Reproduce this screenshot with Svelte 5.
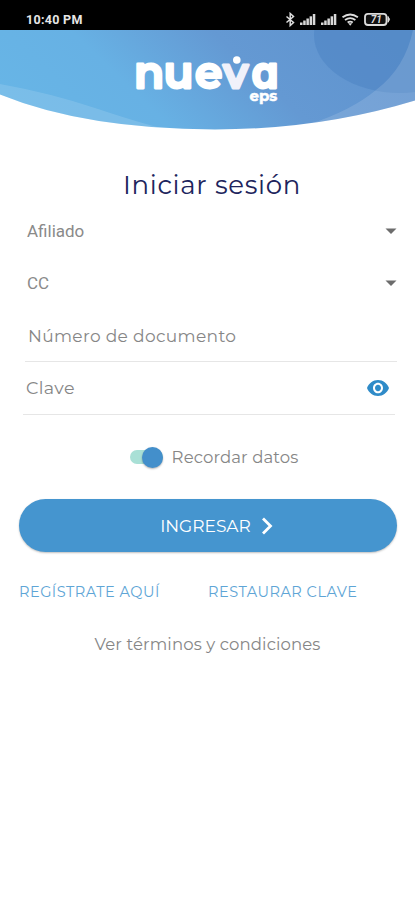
<script>
  let remember = $state(true);
  let showPassword = $state(false);
  let documento = $state("");
  let clave = $state("");

  const selects = [
    { id: "tipo", value: "Afiliado" },
    { id: "documento", value: "CC" },
  ];
</script>

<main>
  <div class="status">
    <span class="time">10:40 PM</span>
    <svg class="status-icons" width="108" height="16" viewBox="284 12 108 16">
      <path d="M286.5 16.5l7 6-3.3 3v-12l3.3 3-7 6" fill="none" stroke="#ddd" stroke-width="1.5" />
      {#each [300, 321] as x}
        <g fill="#d8d8d8">
          <rect {x} y="22.5" width="2.5" height="2.5" />
          <rect x={x + 3.2} y="20.5" width="2.5" height="4.5" />
          <rect x={x + 6.4} y="18.5" width="2.5" height="6.5" />
          <rect x={x + 9.6} y="16.3" width="2.5" height="8.7" />
          <rect x={x + 12.8} y="14" width="2.5" height="11" />
        </g>
      {/each}
      <g fill="none" stroke="#ddd" stroke-width="1.8">
        <path d="M342.5 17.3q7.7-5.6 15.4 0" />
        <path d="M345 20q5.2-3.8 10.4 0" />
        <path d="M347.6 22.5q2.6-1.8 5.2 0" />
      </g>
      <path d="M348.2 23.3h4l-2 2.5z" fill="#ddd" />
      <rect x="365" y="13.8" width="21.5" height="11.2" rx="3" fill="#111" stroke="#ddd" stroke-width="1.8" />
      <path d="M388 16.5q3 2.8 0 5.8z" fill="#ddd" stroke="#ddd" />
      <text x="376.3" y="22.9" text-anchor="middle" class="battery">71</text>
    </svg>
  </div>

  <header>
    <svg width="415" height="100" viewBox="0 30 415 100">
      <defs>
        <linearGradient id="sky" x1="0" y1="0.6" x2="1" y2="0.35">
          <stop offset="0" stop-color="#67b5e6" />
          <stop offset="0.3" stop-color="#67b1e4" />
          <stop offset="0.62" stop-color="#6499d3" />
          <stop offset="1" stop-color="#6093ce" />
        </linearGradient>
        <clipPath id="curve">
          <path d="M0 30H415V100.5Q320 129.5 215 129.5Q85 129 0 94.5Z" />
        </clipPath>
      </defs>
      <g clip-path="url(#curve)">
        <rect y="30" width="415" height="100" fill="url(#sky)" />
        <ellipse cx="400" cy="35" rx="86" ry="58" fill="#4f86c5" opacity="0.6" />
        <path d="M0 84Q50 93 95 108T165 129H0z" fill="#fff" opacity="0.13" />
        <path d="M413 30Q405 68 376 90Q352 110 310 124L415 125V30z" fill="#fff" opacity="0.13" />
      </g>
      <text class="logo" y="87.500"><tspan x="134">n</tspan><tspan x="163.500">u</tspan><tspan x="195">e</tspan><tspan class="vee" x="223.300">v</tspan><tspan class="single" x="251.500">a</tspan><tspan class="eps" x="249.500" y="100.500">eps</tspan></text>
      <circle cx="236.800" cy="60" r="3.800" fill="#fff" />
    </svg>
  </header>

  <h1>Iniciar sesión</h1>

  <form onsubmit={(e) => e.preventDefault()}>
    {#each selects as item (item.id)}
      <div class="select">
        <span>{item.value}</span>
        <svg width="12" height="6" viewBox="0 0 12 6"><path d="M0.5 0.5h11L6 6z" fill="#6c6c6c" /></svg>
      </div>
    {/each}

    <div class="field doc">
      <input type="text" placeholder="Número de documento" bind:value={documento} />
    </div>
    <div class="field pass">
      <input type={showPassword ? "text" : "password"} placeholder="Clave" bind:value={clave} />
      <button type="button" class="eye" aria-label="Mostrar clave" onclick={() => (showPassword = !showPassword)}>
        <svg width="22" height="16" viewBox="1 4.5 22 15" preserveAspectRatio="none">
          <path fill="#2f8bc8" d="M12 4.5C7 4.5 2.73 7.61 1 12c1.73 4.39 6 7.5 11 7.5s9.27-3.11 11-7.5c-1.73-4.39-6-7.5-11-7.5zM12 17c-2.76 0-5-2.24-5-5s2.24-5 5-5 5 2.24 5 5-2.24 5-5 5zm0-8c-1.66 0-3 1.34-3 3s1.34 3 3 3 3-1.34 3-3-1.34-3-3-3z" />
        </svg>
      </button>
    </div>

    <label class="remember">
      <input type="checkbox" bind:checked={remember} />
      <span class="track" class:on={remember}><span class="thumb"></span></span>
      <span class="label">Recordar datos</span>
    </label>

    <button type="submit" class="submit">
      <span>INGRESAR</span>
      <svg width="12" height="18" viewBox="0 0 12 18"><path d="M2 1.5l7.5 7.5L2 16.5" fill="none" stroke="#fff" stroke-width="2.8" /></svg>
    </button>
  </form>

  <nav>
    <a href="#registro">REGÍSTRATE AQUÍ</a>
    <a href="#restaurar">RESTAURAR CLAVE</a>
  </nav>

  <a class="terms" href="#terminos">Ver términos y condiciones</a>
</main>

<style>
  :global(body) {
    margin: 0;
    background: #fff;
  }
  main {
    width: 415px;
    height: 900px;
    overflow: hidden;
    display: flex;
    flex-direction: column;
    background: #fff;
    font-family: Montserrat, Inter, sans-serif;
    color: #7b7b7b;
  }
  .status {
    height: 30px;
    flex: none;
    box-sizing: border-box;
    padding: 9px 23px 0 26px;
    display: flex;
    justify-content: space-between;
    background: #000;
  }
  .time {
    margin-top: 3px;
    font: 700 12.5px/16px Roboto, sans-serif;
    color: #e6e6e6;
    letter-spacing: 0.3px;
  }
  .status-icons {
    margin-top: 3px;
  }
  .battery {
    font: italic 700 10px Roboto, sans-serif;
    fill: #ddd;
  }
  header {
    height: 100px;
    flex: none;
  }
  header svg {
    display: block;
  }
  .logo {
    font: 600 44px Montserrat, Inter, sans-serif;
    fill: #fff;
    stroke: #fff;
    stroke-width: 2.8;
    stroke-linejoin: round;
  }
  .vee {
    font-size: 43px;
    fill: #f0f1fa;
    stroke: #f0f1fa;
  }
  .single {
    font-family: Inter, sans-serif;
    font-feature-settings: "cv11";
    font-size: 43px;
  }
  .eps {
    font-size: 15px;
    font-weight: 700;
    stroke-width: 0.5;
  }
  h1 {
    margin: 38px 0 0;
    padding-left: 9px;
    font-size: 26px;
    line-height: 34px;
    font-weight: 400;
    letter-spacing: 0.7px;
    text-align: center;
    color: #20245c;
  }
  form {
    display: flex;
    flex-direction: column;
    padding: 3px 18px 0 19px;
  }
  .select {
    height: 52px;
    display: flex;
    align-items: center;
    justify-content: space-between;
    padding: 0 0 0 8px;
    font: 400 17px/24px Roboto, sans-serif;
    color: #8a8a8a;
  }
  .field {
    display: flex;
    align-items: center;
    box-sizing: border-box;
    border-bottom: 1px solid #e6e6e6;
  }
  .doc {
    height: 53px;
    margin-left: 6px;
    padding: 2px 0 0 3px;
  }
  .pass {
    height: 53px;
    margin: 0 2px 0 4px;
    padding: 0 6px 0 3px;
  }
  .field input {
    flex: 1;
    min-width: 0;
    border: 0;
    padding: 0;
    outline: none;
    background: none;
    font: 400 17px/24px Montserrat, Inter, sans-serif;
    letter-spacing: 0.35px;
    color: #666;
  }
  .pass input {
    font-size: 17.5px;
  }
  .field input::placeholder {
    color: #868686;
    opacity: 1;
  }
  .eye {
    border: 0;
    padding: 0;
    background: none;
    display: flex;
  }
  .remember {
    display: flex;
    align-items: center;
    align-self: center;
    height: 24px;
    margin: 30px 0 30px 12px;
  }
  .remember input {
    display: none;
  }
  .track {
    width: 33px;
    height: 14px;
    border-radius: 7px;
    background: #ccc;
    display: flex;
    align-items: center;
    margin-right: 9px;
  }
  .track.on {
    background: #a9e0d6;
    justify-content: flex-end;
  }
  .thumb {
    width: 21px;
    height: 21px;
    border-radius: 50%;
    background: #438fcb;
    box-shadow: 0 1px 2px rgba(0, 0, 0, 0.3);
    flex: none;
  }
  .label {
    font-size: 16.5px;
    letter-spacing: 0.1px;
    color: #868686;
  }
  .submit {
    height: 53px;
    border: 0;
    border-radius: 27px;
    padding: 0 0 0 17px;
    display: flex;
    align-items: center;
    justify-content: center;
    gap: 10px;
    background: #4595cf;
    box-shadow: 0 1px 2px rgba(0, 0, 0, 0.25);
    color: #fff;
    font: 400 17px Montserrat, Inter, sans-serif;
  }
  nav {
    display: flex;
    margin: 30px 0 0 19px;
    line-height: 20px;
  }
  nav a {
    width: 189px;
    font-size: 14.5px;
    letter-spacing: 0.5px;
    color: #5ea5d6;
    text-decoration: none;
  }
  .terms {
    margin-top: 30px;
    text-align: center;
    font-size: 16.5px;
    line-height: 24px;
    letter-spacing: 0.12px;
    color: #868686;
    text-decoration: none;
  }
</style>
